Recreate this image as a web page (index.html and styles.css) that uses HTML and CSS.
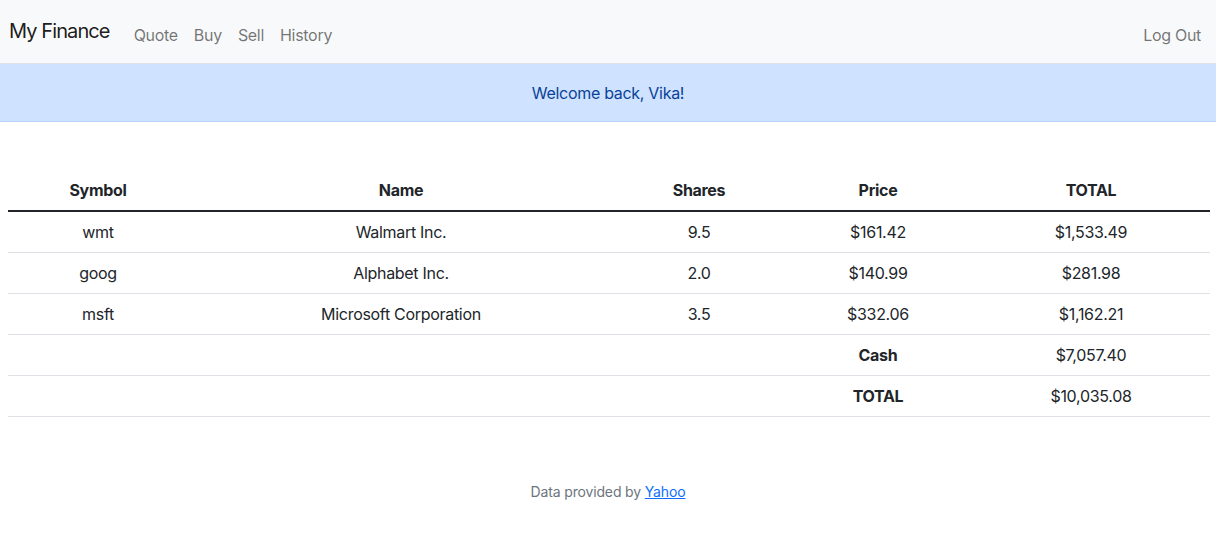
FILE: index.html
```html
<!DOCTYPE html>
<html lang="en">
<head>
<meta charset="utf-8">
<title>My Finance: Portfolio</title>
<link rel="stylesheet" href="styles.css">
</head>
<body>
<nav class="navbar">
  <a class="brand" href="#">My Finance</a>
  <ul class="nav-list">
    <li><a class="nav-link" href="#">Quote</a></li>
    <li><a class="nav-link" href="#">Buy</a></li>
    <li><a class="nav-link" href="#">Sell</a></li>
    <li><a class="nav-link" href="#">History</a></li>
  </ul>
  <ul class="nav-list nav-right">
    <li><a class="nav-link" href="#">Log Out</a></li>
  </ul>
</nav>
<header class="alert">Welcome back, Vika!</header>
<main class="main">
  <table class="table">
    <colgroup>
      <col class="c1"><col class="c2"><col class="c3"><col class="c4"><col class="c5">
    </colgroup>
    <thead>
      <tr><th>Symbol</th><th>Name</th><th>Shares</th><th>Price</th><th>TOTAL</th></tr>
    </thead>
    <tbody>
      <tr><td>wmt</td><td>Walmart Inc.</td><td>9.5</td><td>$161.42</td><td>$1,533.49</td></tr>
      <tr><td>goog</td><td>Alphabet Inc.</td><td>2.0</td><td>$140.99</td><td>$281.98</td></tr>
      <tr><td>msft</td><td>Microsoft Corporation</td><td>3.5</td><td>$332.06</td><td>$1,162.21</td></tr>
      <tr><td></td><td></td><td></td><td class="bold">Cash</td><td>$7,057.40</td></tr>
      <tr><td></td><td></td><td></td><td class="bold">TOTAL</td><td>$10,035.08</td></tr>
    </tbody>
  </table>
</main>
<footer class="footer">Data provided by <a class="footer-link" href="#">Yahoo</a></footer>
</body>
</html>
```
FILE: styles.css
```css
* { box-sizing: border-box; }
html, body { margin: 0; padding: 0; }
body {
  font-family: Inter, "Noto Sans", "Liberation Sans", sans-serif;
  font-size: 16px;
  line-height: 1.5;
  letter-spacing: -0.3px;
  color: #212529;
  background: #fff;
}
.navbar {
  display: flex;
  align-items: center;
  height: 64px;
  padding: 0 7px 0 9px;
  background: #f8f9fa;
  border-bottom: 1px solid #dee2e6;
}
.brand {
  font-size: 20px;
  line-height: 30px;
  letter-spacing: -0.9px;
  color: rgba(0,0,0,.9);
  text-decoration: none;
  margin-right: 16px;
  margin-top: -2px;
}
.nav-list {
  display: flex;
  list-style: none;
  margin: 6px 0 0 0;
  padding: 0;
}
.nav-right { margin-left: auto; }
.nav-link {
  display: block;
  padding: 8px;
  color: rgba(0,0,0,.55);
  text-decoration: none;
}
.alert {
  height: 58px;
  display: flex;
  align-items: center;
  justify-content: center;
  background: #cfe2ff;
  color: #084298;
  border-bottom: 1px solid #b6d4fe;
  padding-top: 1px;
}
.main {
  padding: 48px 6px 48px 8px;
}
.table {
  width: 100%;
  border-collapse: collapse;
  text-align: center;
}
.c1 { width: 180px; }
.c2 { width: 426px; }
.c3 { width: 170px; }
.c4 { width: 188px; }
.c5 { width: auto; }
.table th, .table td {
  padding: 8px;
  border-bottom: 1px solid #dee2e6;
  height: 41px;
}
.table th {
  font-weight: 700;
  border-bottom: 2px solid #212529;
}
.bold { font-weight: 700; }
.footer {
  margin-top: 16px;
  text-align: center;
  font-size: 14px;
  letter-spacing: -0.15px;
  color: #6c757d;
}
.footer-link { color: #0d6efd; }
```
